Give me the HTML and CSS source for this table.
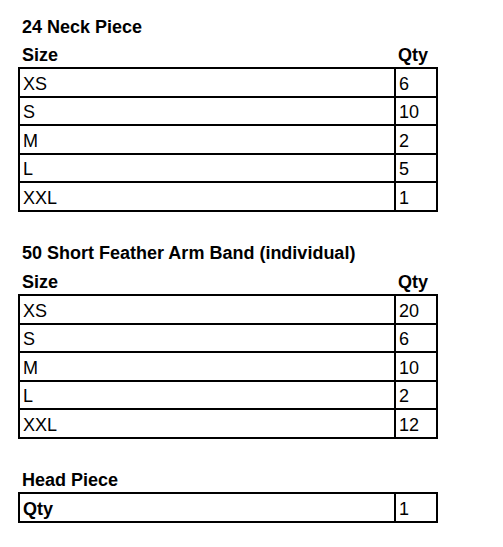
FILE: index.html
```html
<!DOCTYPE html>
<html>
<head>
<meta charset="utf-8">
<link rel="stylesheet" href="styles.css">
</head>
<body>
<div class="sheet">
  <section class="block">
    <div class="title">24 Neck Piece</div>
    <div class="head"><span>Size</span><span>Qty</span></div>
    <table class="grid">
      <colgroup><col class="c-size"><col class="c-qty"></colgroup>
      <tr><td>XS</td><td>6</td></tr>
      <tr><td>S</td><td>10</td></tr>
      <tr><td>M</td><td>2</td></tr>
      <tr><td>L</td><td>5</td></tr>
      <tr><td>XXL</td><td>1</td></tr>
    </table>
  </section>
  <section class="block">
    <div class="title">50 Short Feather Arm Band (individual)</div>
    <div class="head"><span>Size</span><span>Qty</span></div>
    <table class="grid">
      <colgroup><col class="c-size"><col class="c-qty"></colgroup>
      <tr><td>XS</td><td>20</td></tr>
      <tr><td>S</td><td>6</td></tr>
      <tr><td>M</td><td>10</td></tr>
      <tr><td>L</td><td>2</td></tr>
      <tr><td>XXL</td><td>12</td></tr>
    </table>
  </section>
  <section class="block">
    <div class="title">Head Piece</div>
    <table class="grid">
      <colgroup><col class="c-size"><col class="c-qty"></colgroup>
      <tr><td class="bold">Qty</td><td>1</td></tr>
    </table>
  </section>
</div>
</body>
</html>
```

FILE: styles.css
```css
html, body {
  margin: 0;
  padding: 0;
  background: #fff;
}
.sheet {
  padding: 10px 0 0 18px;
  font-family: "Liberation Sans", Arial, sans-serif;
  font-size: 18px;
  color: #000;
  width: 419px;
}
.block {
  margin-bottom: 25px;
}
.title, .head {
  height: 28.5px;
  box-sizing: border-box;
  display: flex;
  align-items: flex-end;
  line-height: 18px;
  padding-bottom: 3px;
  padding-left: 4px;
  font-weight: bold;
}
.head {
  display: grid;
  grid-template-columns: 376px 42px;
  padding-left: 0;
}
.head span:first-child {
  padding-left: 4px;
}
.head span:last-child {
  padding-left: 4px;
}
.grid {
  border-collapse: collapse;
  width: 418px;
  table-layout: fixed;
}
.c-size {
  width: 376px;
}
.c-qty {
  width: 42px;
}
.grid tr {
  height: 28.6px;
}
.grid td {
  border: 2px solid #000;
  padding: 0 2px 3px 3px;
  vertical-align: bottom;
  line-height: 18px;
}
.bold {
  font-weight: bold;
}
```
